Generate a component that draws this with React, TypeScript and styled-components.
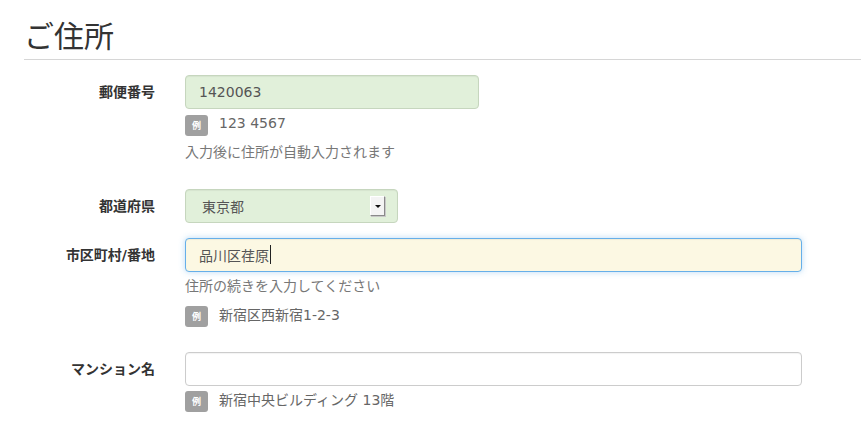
import React from "react";
import styled, { createGlobalStyle } from "styled-components";

const Global = createGlobalStyle`
  html, body { margin: 0; padding: 0; background: #fff; }
  body { font-family: "DejaVu Sans", "Noto Sans CJK JP", sans-serif; color: #333; }
  * { box-sizing: border-box; }
`;

const Page = styled.div`
  padding: 14px 0 0 24px;
  width: 861px;
`;

const Heading = styled.h2`
  margin: 0;
  font-family: "Noto Sans CJK JP", sans-serif;
  font-size: 30px;
  font-weight: 400;
  line-height: 40px;
  color: #333;
  padding-bottom: 5px;
  border-bottom: 1px solid #d6d6d6;
`;

const Form = styled.div`
  display: grid;
  grid-template-columns: 131px 1fr;
  column-gap: 30px;
  margin-top: 15px;
`;

const Label = styled.div`
  text-align: right;
  font-size: 14px;
  font-weight: 700;
  color: #333;
  height: 34px;
  line-height: 34px;
  white-space: nowrap;
`;

const Control = styled.div<{ $pb: number }>`
  display: flex;
  flex-direction: column;
  align-items: flex-start;
  padding-bottom: ${(p) => p.$pb}px;
`;

type Tone = "success" | "focus" | "plain";

const fieldBg: Record<Tone, string> = {
  success: "#e1f0da",
  focus: "#fcf8e3",
  plain: "#ffffff",
};
const fieldBorder: Record<Tone, string> = {
  success: "#c6d6be",
  focus: "#66afe9",
  plain: "#cccccc",
};

const Field = styled.div<{ $w: number; $tone: Tone }>`
  width: ${(p) => p.$w}px;
  height: 34px;
  border: 1px solid ${(p) => fieldBorder[p.$tone]};
  border-radius: 4px;
  background: ${(p) => fieldBg[p.$tone]};
  box-shadow: ${(p) =>
    p.$tone === "focus"
      ? "inset 0 1px 1px rgba(0,0,0,.05), 0 0 6px rgba(102,175,233,.45)"
      : "inset 0 1px 1px rgba(0,0,0,.05)"};
  display: flex;
  align-items: center;
  padding: 0 13px 1px;
  font-size: 14px;
  color: #555;
`;

const Caret = styled.span`
  display: inline-block;
  width: 1px;
  height: 19px;
  background: #222;
  margin-left: 1px;
`;

const SelectBox = styled(Field)`
  padding: 0 12px 0 16px;
  justify-content: space-between;
`;

const ArrowButton = styled.span`
  width: 15px;
  height: 20px;
  background: #f4f4f4;
  border-top: 1px solid #fff;
  border-left: 1px solid #fff;
  border-right: 1px solid #8a8a8a;
  border-bottom: 1px solid #8a8a8a;
  box-shadow: 1px 1px 0 #c8c8c8;
  display: flex;
  align-items: center;
  justify-content: center;
`;

const Triangle = styled.span`
  width: 0;
  height: 0;
  border-left: 3px solid transparent;
  border-right: 3px solid transparent;
  border-top: 3px solid #111;
`;

const Example = styled.div<{ $mt: number }>`
  display: flex;
  align-items: center;
  gap: 11px;
  margin-top: ${(p) => p.$mt}px;
  font-size: 14px;
  color: #666;
  height: 21px;
`;

const ExampleText = styled.span`
  padding-bottom: 5px;
`;

const Badge = styled.span`
  width: 23px;
  height: 21px;
  border-radius: 3px;
  background: #a0a0a0;
  color: #fff;
  font-family: "Noto Sans CJK JP", sans-serif;
  font-size: 9px;
  font-weight: 700;
  display: flex;
  align-items: center;
  justify-content: center;
`;

const Help = styled.div<{ $mt: number }>`
  margin-top: ${(p) => p.$mt}px;
  font-size: 14px;
  color: #777;
  line-height: 20px;
`;

export default function App() {
  return (
    <>
      <Global />
      <Page>
        <Heading>ご住所</Heading>
        <Form>
          <Label>郵便番号</Label>
          <Control $pb={27}>
            <Field $w={294} $tone="success">1420063</Field>
            <Example $mt={6}>
              <Badge>例</Badge>
              <ExampleText>123 4567</ExampleText>
            </Example>
            <Help $mt={6}>入力後に住所が自動入力されます</Help>
          </Control>

          <Label>都道府県</Label>
          <Control $pb={15}>
            <SelectBox $w={213} $tone="success">
              <span>東京都</span>
              <ArrowButton>
                <Triangle />
              </ArrowButton>
            </SelectBox>
          </Control>

          <Label>市区町村/番地</Label>
          <Control $pb={25}>
            <Field $w={617} $tone="focus">
              品川区荏原
              <Caret />
            </Field>
            <Help $mt={4}>住所の続きを入力してください</Help>
            <Example $mt={10}>
              <Badge>例</Badge>
              <ExampleText>新宿区西新宿1-2-3</ExampleText>
            </Example>
          </Control>

          <Label>マンション名</Label>
          <Control $pb={10}>
            <Field $w={617} $tone="plain" />
            <Example $mt={5}>
              <Badge>例</Badge>
              <ExampleText>新宿中央ビルディング 13階</ExampleText>
            </Example>
          </Control>
        </Form>
      </Page>
    </>
  );
}
